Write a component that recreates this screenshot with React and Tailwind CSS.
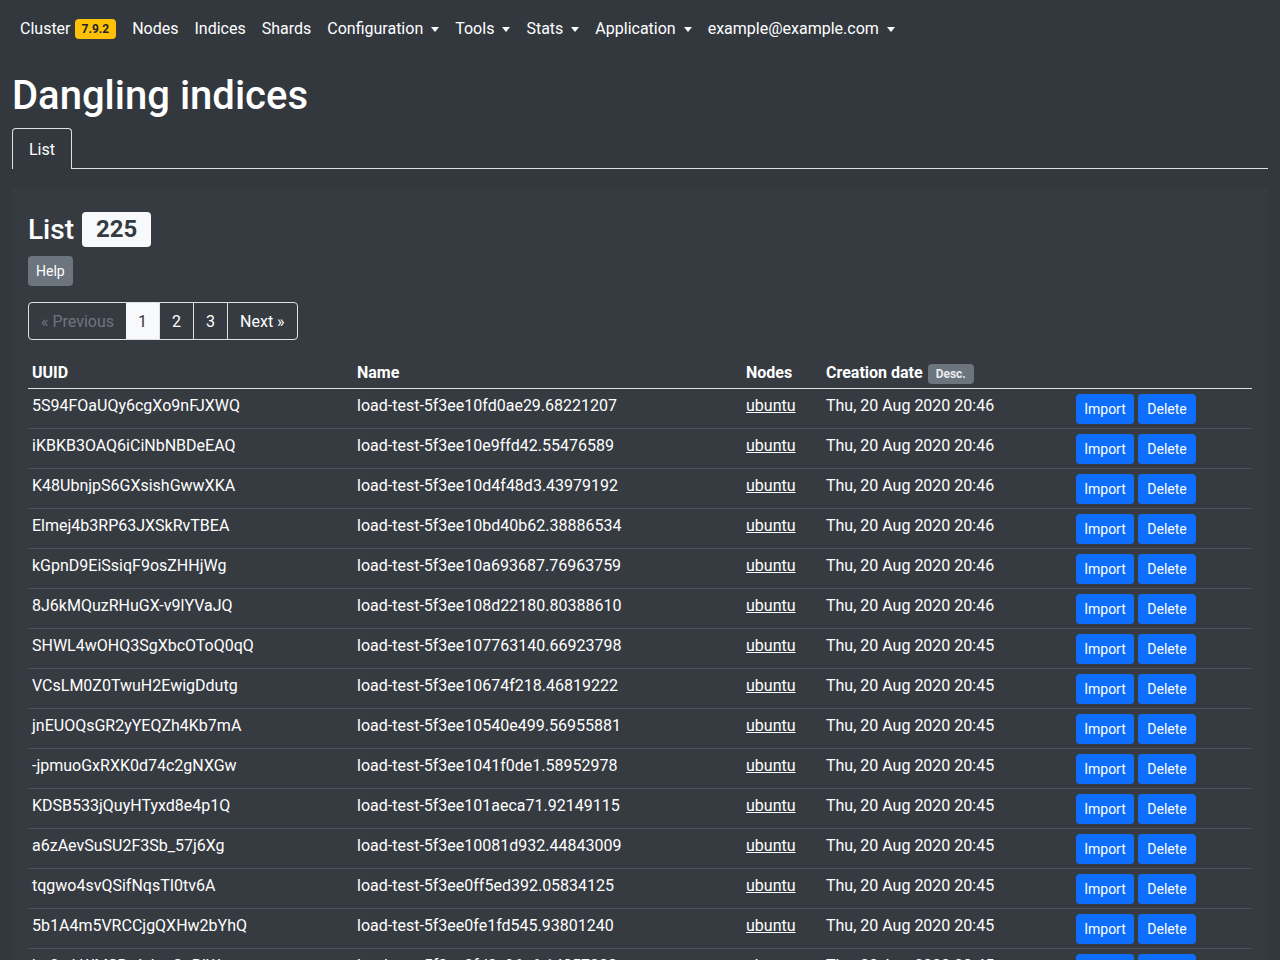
import React from 'react';

const rows = [
  ['5S94FOaUQy6cgXo9nFJXWQ', 'load-test-5f3ee10fd0ae29.68221207', '20:46'],
  ['iKBKB3OAQ6iCiNbNBDeEAQ', 'load-test-5f3ee10e9ffd42.55476589', '20:46'],
  ['K48UbnjpS6GXsishGwwXKA', 'load-test-5f3ee10d4f48d3.43979192', '20:46'],
  ['Elmej4b3RP63JXSkRvTBEA', 'load-test-5f3ee10bd40b62.38886534', '20:46'],
  ['kGpnD9EiSsiqF9osZHHjWg', 'load-test-5f3ee10a693687.76963759', '20:46'],
  ['8J6kMQuzRHuGX-v9lYVaJQ', 'load-test-5f3ee108d22180.80388610', '20:46'],
  ['SHWL4wOHQ3SgXbcOToQ0qQ', 'load-test-5f3ee107763140.66923798', '20:45'],
  ['VCsLM0Z0TwuH2EwigDdutg', 'load-test-5f3ee10674f218.46819222', '20:45'],
  ['jnEUOQsGR2yYEQZh4Kb7mA', 'load-test-5f3ee10540e499.56955881', '20:45'],
  ['-jpmuoGxRXK0d74c2gNXGw', 'load-test-5f3ee1041f0de1.58952978', '20:45'],
  ['KDSB533jQuyHTyxd8e4p1Q', 'load-test-5f3ee101aeca71.92149115', '20:45'],
  ['a6zAevSuSU2F3Sb_57j6Xg', 'load-test-5f3ee10081d932.44843009', '20:45'],
  ['tqgwo4svQSifNqsTI0tv6A', 'load-test-5f3ee0ff5ed392.05834125', '20:45'],
  ['5b1A4m5VRCCjgQXHw2bYhQ', 'load-test-5f3ee0fe1fd545.93801240', '20:45'],
  ['bzOwkWMSRyAdqeGuRIWg', 'load-test-5f3ee0fd3c96a6.14857238', '20:45'],
];

const Caret = () => (
  <span className="ml-2 inline-block align-middle w-0 h-0 border-t-[5px] border-t-white border-x-[4.5px] border-x-transparent" />
);

const NavLink = ({ children, dropdown }) => (
  <a className="px-2 py-2 flex items-center text-white leading-6">
    {children}
    {dropdown && <Caret />}
  </a>
);

export default function App() {
  return (
    <div
      className="min-h-screen bg-[#33383f] text-white text-[16px]"
      style={{ fontFamily: 'Roboto, "Noto Sans", sans-serif' }}
    >
      {/* Navbar */}
      <nav className="h-14 px-3 pt-[2px] flex items-center">
        <NavLink>
          Cluster
          <span className="ml-1 bg-[#ffc107] text-[#212529] text-[12px] font-bold px-[7px] py-[2px] rounded leading-[16px]">7.9.2</span>
        </NavLink>
        <NavLink>Nodes</NavLink>
        <NavLink>Indices</NavLink>
        <NavLink>Shards</NavLink>
        <NavLink dropdown>Configuration</NavLink>
        <NavLink dropdown>Tools</NavLink>
        <NavLink dropdown>Stats</NavLink>
        <NavLink dropdown>Application</NavLink>
        <NavLink dropdown>example@example.com</NavLink>
      </nav>

      <div className="px-3 pt-4">
        <h1 className="text-[40px] leading-[48px] font-medium mb-2">Dangling indices</h1>

        {/* Tabs */}
        <div className="flex border-b border-[#dee2e6]">
          <div className="px-4 pt-[9px] pb-[7px] leading-6 border border-b-0 border-[#dee2e6] rounded-t-[4px] -mb-px bg-[#33383f]">List</div>
        </div>

        {/* Card */}
        <div className="mt-5 bg-[#363b42] px-4 pt-[23px]">
          <div className="flex items-center gap-2">
            <h3 className="text-[28px] leading-[34px] font-medium">List</h3>
            <span className="bg-[#f8f9fa] text-[#343a40] text-[24px] font-bold leading-[35px] px-[14px] rounded-[4px]">225</span>
          </div>
          <button className="mt-[9px] bg-[#6c757d] text-white text-[14px] leading-[21px] px-2 pt-[5px] pb-[4px] rounded-[4px]">Help</button>

          {/* Pagination */}
          <div className="mt-4 flex">
            <div className="flex border border-[#dee2e6] rounded-[4px] overflow-hidden leading-6">
              <span className="px-3 pt-[7px] pb-[5px] text-[#6c757d]">« Previous</span>
              <span className="px-3 pt-[7px] pb-[5px] bg-[#f8f9fa] text-[#343a40]">1</span>
              <span className="px-3 pt-[7px] pb-[5px] border-l border-[#dee2e6]">2</span>
              <span className="px-3 pt-[7px] pb-[5px] border-l border-[#dee2e6]">3</span>
              <span className="px-3 pt-[7px] pb-[5px] border-l border-[#dee2e6]">Next »</span>
            </div>
          </div>

          {/* Table */}
          <table className="mt-4 w-full border-collapse text-left">
            <thead>
              <tr className="border-b border-[#dee2e6]">
                <th className="px-1 pt-[5px] pb-[3px] font-bold w-[325px]">UUID</th>
                <th className="px-1 pt-[5px] pb-[3px] font-bold w-[389px]">Name</th>
                <th className="px-1 pt-[5px] pb-[3px] font-bold w-[80px]">Nodes</th>
                <th className="px-1 pt-[5px] pb-[3px] font-bold w-[250px]">
                  Creation date
                  <span className="ml-[5px] bg-[#6c757d] text-[#e9ecef] text-[12px] font-bold px-[8px] py-[3px] rounded-[4px] align-middle">Desc.</span>
                </th>
                <th className="p-1"></th>
              </tr>
            </thead>
            <tbody>
              {rows.map(([uuid, name, time]) => (
                <tr key={uuid} className="h-10 border-b border-[#4b5159] align-top">
                  <td className="px-1 pt-[5px] pb-[3px] leading-6">{uuid}</td>
                  <td className="px-1 pt-[5px] pb-[3px] leading-6">{name}</td>
                  <td className="px-1 pt-[5px] pb-[3px] leading-6"><a className="underline">ubuntu</a></td>
                  <td className="px-1 pt-[5px] pb-[3px] leading-6">Thu, 20 Aug 2020 {time}</td>
                  <td className="p-1">
                    <div className="flex gap-1 pt-[1px]">
                      <button className="min-w-[58px] bg-[#0d6efd] text-white text-[14px] leading-[21px] px-2 pt-[5px] pb-[4px] rounded-[4px]">Import</button>
                      <button className="min-w-[58px] bg-[#0d6efd] text-white text-[14px] leading-[21px] px-2 pt-[5px] pb-[4px] rounded-[4px]">Delete</button>
                    </div>
                  </td>
                </tr>
              ))}
            </tbody>
          </table>
        </div>
      </div>
    </div>
  );
}
